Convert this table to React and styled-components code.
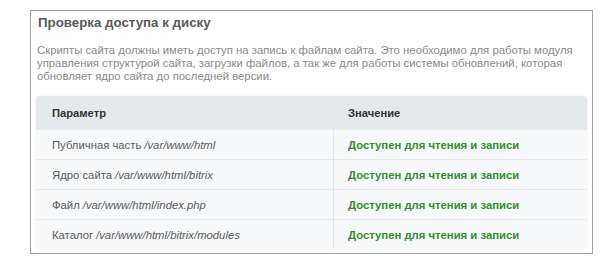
import React from "react";
import styled, { createGlobalStyle } from "styled-components";

const Global = createGlobalStyle`
  html, body { margin: 0; padding: 0; background: #fff; }
  body { font-family: "Liberation Sans", Arial, sans-serif; }
`;

const Page = styled.div`
  padding: 10px 0 0 30px;
`;

const Box = styled.section`
  box-sizing: border-box;
  width: 563px;
  border: 1px solid #a3a3a3;
  padding: 3px 5px 4px 5px;
`;

const Title = styled.h2`
  margin: 0 0 0 2px;
  font-size: 13.3px;
  line-height: 18px;
  font-weight: bold;
  color: #5a5a5a;
`;

const Text = styled.p`
  margin: 12px 0 13px 1px;
  font-size: 11.35px;
  line-height: 13px;
  color: #8a8a8a;
  white-space: nowrap;
`;

const Table = styled.div`
  border-radius: 4px;
  overflow: hidden;
  box-shadow: 0 0 2px rgba(0, 0, 0, 0.08);
  background: #f7f9fa;
`;

const Row = styled.div`
  display: grid;
  grid-template-columns: 297px 1fr;
  height: ${(p) => (p.$head ? "33px" : "30px")};
  background: ${(p) => (p.$head ? "#e4eaec" : "#f7f9fa")};
  border-top: ${(p) => (p.$head ? "none" : "1px solid #e6eaec")};
  box-sizing: border-box;
`;

const Cell = styled.div`
  display: flex;
  align-items: center;
  white-space: nowrap;
  padding-left: ${(p) => (p.$second ? "14px" : "16px")};
  border-left: ${(p) => (p.$second ? "1px solid #e3e7e9" : "none")};
  font-size: ${(p) => (p.$ok ? "11.3px" : p.$head ? "11.2px" : "11.3px")};
  font-weight: ${(p) => (p.$head || p.$ok ? "bold" : "normal")};
  color: ${(p) => (p.$ok ? "#2f8f2a" : p.$head ? "#333" : "#5a5a5a")};
`;

const Path = styled.i`
  margin-left: 3px;
`;

const rows = [
  ["Публичная часть", "/var/www/html"],
  ["Ядро сайта", "/var/www/html/bitrix"],
  ["Файл", "/var/www/html/index.php"],
  ["Каталог", "/var/www/html/bitrix/modules"],
];

export default function App() {
  return (
    <>
      <Global />
      <Page>
        <Box>
          <Title>Проверка доступа к диску</Title>
          <Text>
            Скрипты сайта должны иметь доступ на запись к файлам сайта. Это необходимо для работы модуля
            <br />
            управления структурой сайта, загрузки файлов, а так же для работы системы обновлений, которая
            <br />
            обновляет ядро сайта до последней версии.
          </Text>
          <Table>
            <Row $head>
              <Cell $head>Параметр</Cell>
              <Cell $head $second>Значение</Cell>
            </Row>
            {rows.map(([label, path]) => (
              <Row key={path}>
                <Cell>
                  {label}
                  <Path>{path}</Path>
                </Cell>
                <Cell $second $ok>Доступен для чтения и записи</Cell>
              </Row>
            ))}
          </Table>
        </Box>
      </Page>
    </>
  );
}
